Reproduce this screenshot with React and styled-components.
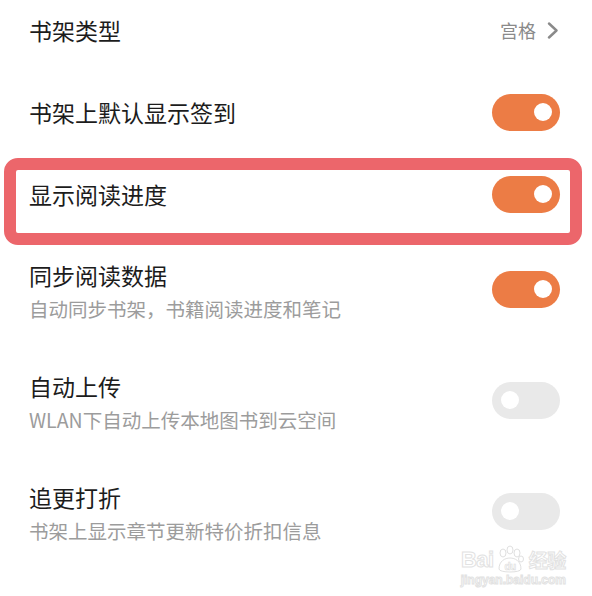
import React from 'react';
import styled, { createGlobalStyle } from 'styled-components';

const GlobalStyle = createGlobalStyle`
  body {
    margin: 0;
    background: #fff;
    font-family: "Noto Sans CJK SC", "Noto Sans", sans-serif;
  }
`;

const Page = styled.div`
  position: relative;
  width: 592px;
  height: 596px;
  overflow: hidden;
  background: #fff;
`;

const Row = styled.div`
  display: flex;
  align-items: center;
  justify-content: space-between;
  height: ${(p) => p.$height || 60}px;
  margin-top: ${(p) => p.$top || 0}px;
  padding: 0 32px 0 29px;
`;

const Highlight = styled.div`
  margin: 16px 10px 0 4px;
  border: 12px solid #ec666b;
  border-radius: 14px;
  padding-bottom: 15px;

  ${Row} {
    padding: 0 10px 0 13px;
  }
`;

const TextBlock = styled.div`
  display: flex;
  flex-direction: column;
`;

const Title = styled.div`
  font-size: 23px;
  line-height: 30px;
  color: #1c1c1c;
`;

const Sub = styled.div`
  font-size: 19.5px;
  line-height: 24px;
  margin-top: 7px;
  color: #9c9c9c;
`;

const Value = styled.div`
  display: flex;
  align-items: center;
  gap: 11px;
  font-size: 18px;
  color: #8a8a8a;
  padding-right: 1px;
`;

const Switch = styled.div`
  position: relative;
  width: 68px;
  height: 37px;
  border-radius: 19px;
  background: ${(p) => (p.$on ? '#ec7c45' : '#e9e9e9')};
  margin-bottom: ${(p) => p.$lift || 0}px;
  flex-shrink: 0;

  &::after {
    content: '';
    position: absolute;
    top: 9.5px;
    ${(p) => (p.$on ? 'right: 8px;' : 'left: 9px;')}
    width: 18px;
    height: 18px;
    border-radius: 50%;
    background: #fff;
  }
`;

const Watermark = styled.div`
  position: absolute;
  right: 26px;
  bottom: 9px;
  display: flex;
  flex-direction: column;
  align-items: center;
  font-family: "Liberation Sans", Arial, sans-serif;
  color: #fff;
  -webkit-text-stroke: 1px #e2e2e2;
  pointer-events: none;
`;

const MarkLine = styled.div`
  display: flex;
  align-items: flex-end;
  font-size: 22px;
  font-weight: 700;
  line-height: 24px;
  letter-spacing: -0.5px;
`;

const MarkCn = styled.span`
  font-family: "Noto Sans CJK SC", sans-serif;
  font-size: 19px;
  margin-left: 3px;
`;

const MarkUrl = styled.div`
  font-size: 12px;
  line-height: 14px;
  font-weight: 700;
  margin-top: 1px;
`;

const Chevron = () => (
  <svg width="12" height="17" viewBox="0 0 12 17">
    <polyline points="2,1.5 9.5,8.5 2,15.5" fill="none" stroke="#8a8a8a" strokeWidth="2.4" strokeLinecap="round" strokeLinejoin="round" />
  </svg>
);

const Paw = () => (
  <svg width="30" height="30" viewBox="0 0 30 30" style={{ margin: '0 1px -3px' }}>
    <g fill="#fff" stroke="#e0e0e0" strokeWidth="1">
      <ellipse cx="8" cy="8" rx="3" ry="4" />
      <ellipse cx="15" cy="5" rx="3" ry="4" />
      <ellipse cx="22" cy="8" rx="3" ry="4" />
      <ellipse cx="26" cy="14" rx="2.5" ry="3" />
      <path d="M4 24 C4 16 10 13 15 13 C20 13 26 16 26 24 C26 28 4 28 4 24 Z" />
    </g>
    <text x="15" y="25" textAnchor="middle" fontSize="10" fontWeight="700" fill="#fff" stroke="#dcdcdc" strokeWidth="0.6" fontFamily="Liberation Sans, sans-serif">du</text>
  </svg>
);

const settings = [
  { title: '同步阅读数据', sub: '自动同步书架，书籍阅读进度和笔记', on: true, top: 15 },
  { title: '自动上传', sub: 'WLAN下自动上传本地图书到云空间', on: false, top: 50 },
  { title: '追更打折', sub: '书架上显示章节更新特价折扣信息', on: false, top: 50 },
];

const App = () => {
  return (
    <Page>
      <GlobalStyle />
      <Row $height={60}>
        <Title>书架类型</Title>
        <Value>
          宫格
          <Chevron />
        </Value>
      </Row>
      <Row $height={60} $top={22}>
        <Title>书架上默认显示签到</Title>
        <Switch $on />
      </Row>
      <Highlight>
        <Row $height={48}>
          <Title>显示阅读进度</Title>
          <Switch $on />
        </Row>
      </Highlight>
      {settings.map((s) => (
        <Row key={s.title} $height={61} $top={s.top}>
          <TextBlock>
            <Title>{s.title}</Title>
            <Sub>{s.sub}</Sub>
          </TextBlock>
          <Switch $on={s.on} $lift={3} />
        </Row>
      ))}
      <Watermark>
        <MarkLine>
          Bai
          <Paw />
          <MarkCn>经验</MarkCn>
        </MarkLine>
        <MarkUrl>jingyan.baidu.com</MarkUrl>
      </Watermark>
    </Page>
  );
};

export default App;
